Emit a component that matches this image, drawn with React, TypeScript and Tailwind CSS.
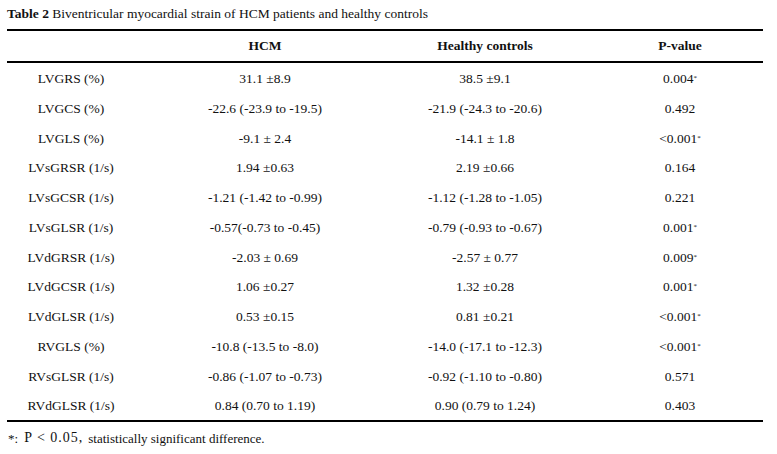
const rows: { label: string; hcm: string; healthy: string; p: string; sig?: boolean }[] = [
  { label: "LVGRS (%)", hcm: "31.1 ±8.9", healthy: "38.5 ±9.1", p: "0.004", sig: true },
  { label: "LVGCS (%)", hcm: "-22.6 (-23.9 to -19.5)", healthy: "-21.9 (-24.3 to -20.6)", p: "0.492" },
  { label: "LVGLS (%)", hcm: "-9.1 ± 2.4", healthy: "-14.1 ± 1.8", p: "<0.001", sig: true },
  { label: "LVsGRSR (1/s)", hcm: "1.94 ±0.63", healthy: "2.19 ±0.66", p: "0.164" },
  { label: "LVsGCSR (1/s)", hcm: "-1.21 (-1.42 to -0.99)", healthy: "-1.12 (-1.28 to -1.05)", p: "0.221" },
  { label: "LVsGLSR (1/s)", hcm: "-0.57(-0.73 to -0.45)", healthy: "-0.79 (-0.93 to -0.67)", p: "0.001", sig: true },
  { label: "LVdGRSR (1/s)", hcm: "-2.03 ± 0.69", healthy: "-2.57 ± 0.77", p: "0.009", sig: true },
  { label: "LVdGCSR (1/s)", hcm: "1.06 ±0.27", healthy: "1.32 ±0.28", p: "0.001", sig: true },
  { label: "LVdGLSR (1/s)", hcm: "0.53 ±0.15", healthy: "0.81 ±0.21", p: "<0.001", sig: true },
  { label: "RVGLS (%)", hcm: "-10.8 (-13.5 to -8.0)", healthy: "-14.0 (-17.1 to -12.3)", p: "<0.001", sig: true },
  { label: "RVsGLSR (1/s)", hcm: "-0.86 (-1.07 to -0.73)", healthy: "-0.92 (-1.10 to -0.80)", p: "0.571" },
  { label: "RVdGLSR (1/s)", hcm: "0.84 (0.70 to 1.19)", healthy: "0.90 (0.79 to 1.24)", p: "0.403" },
];

export default function App() {
  return (
    <div className="w-[777px] h-[454px] bg-white px-[7px] pt-[5px] text-[13.5px] leading-none text-[#111] font-['Liberation_Serif','Times_New_Roman',serif]">
      {/* Caption */}
      <div className="h-[17px] flex items-center">
        <span className="font-bold">Table 2</span>
        <span>&nbsp;Biventricular myocardial strain of HCM patients and healthy controls</span>
      </div>

      {/* Table */}
      <div className="w-[756px] mt-[7px] border-t-2 border-b-2 border-black">
        <div className="grid grid-cols-[128px_260px_180px_188px] h-[32px] items-center border-b-2 border-black font-bold text-center">
          <div></div>
          <div>HCM</div>
          <div>Healthy controls</div>
          <div className="pl-[22px]">P-value</div>
        </div>
        {rows.map((r) => (
          <div
            key={r.label}
            className="grid grid-cols-[128px_260px_180px_188px] h-[29.75px] pt-[2px] items-center text-center"
          >
            <div>{r.label}</div>
            <div>{r.hcm}</div>
            <div>{r.healthy}</div>
            <div className="pl-[22px]">
              {r.p}
              {r.sig && <sup className="text-[7px] relative -top-[3px]">*</sup>}
            </div>
          </div>
        ))}
      </div>

      {/* Footnote */}
      <div className="mt-[9px] pl-px h-[14px] flex items-center text-[13px]">
        <span>*:</span>
        <span className="ml-[6px] tracking-[1px] text-[14px]">P &lt; 0.05,</span>
        <span className="ml-[5px]">statistically significant difference.</span>
      </div>
    </div>
  );
}
